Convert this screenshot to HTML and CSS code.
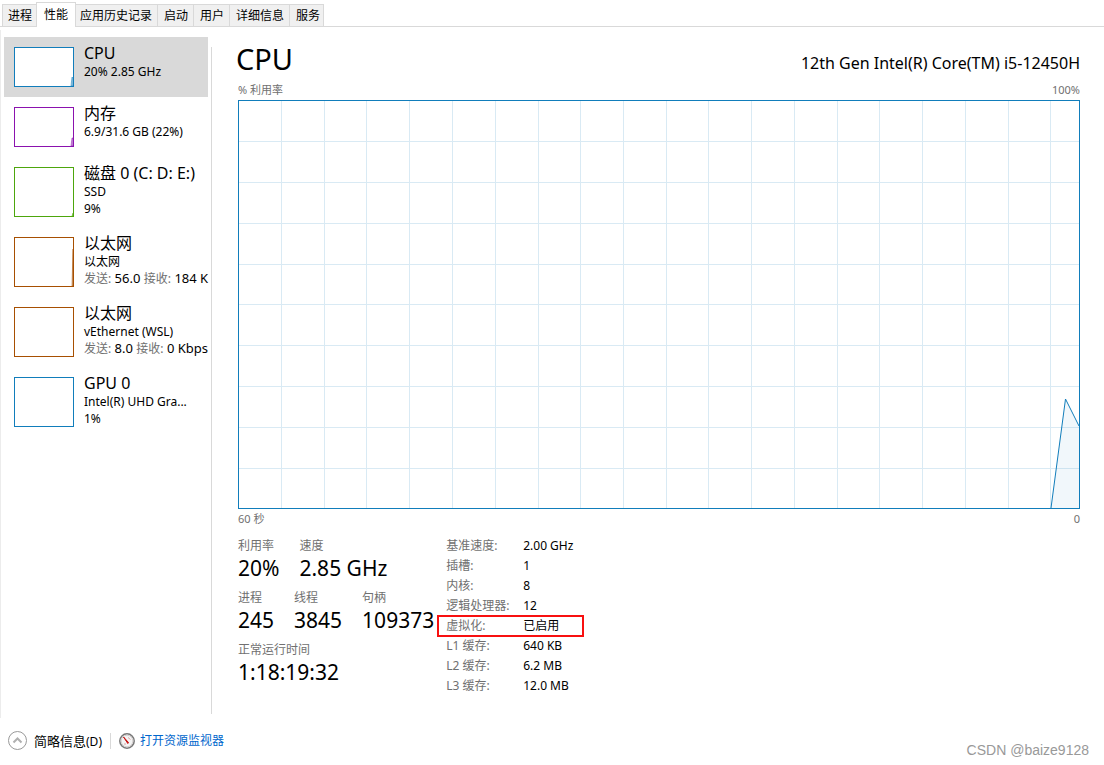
FILE: index.html
```html
<!DOCTYPE html>
<html lang="zh-CN">
<head>
    <meta charset="UTF-8">
    <meta name="viewport" content="width=device-width, initial-scale=1.0">
    <title>任务管理器</title>
    <link rel="stylesheet" href="styles.css">
</head>
<body>

    <nav class="tabs">
        <button class="tab">进程</button>
        <button class="tab active">性能</button>
        <button class="tab">应用历史记录</button>
        <button class="tab">启动</button>
        <button class="tab">用户</button>
        <button class="tab">详细信息</button>
        <button class="tab">服务</button>
    </nav>

    <main>
        <aside class="sidebar">
            <button class="device selected">
                <svg class="thumb blue" viewBox="0 0 58 38"><path d="M56 38L57 29L58 30V38Z"/></svg>
                <span class="device-text">
                    <span class="device-name">CPU</span>
                    <span class="device-info">20% 2.85 GHz</span>
                </span>
            </button>
            <button class="device">
                <svg class="thumb purple" viewBox="0 0 58 38"><path d="M56 38L57 30H58V38Z"/></svg>
                <span class="device-text">
                    <span class="device-name">内存</span>
                    <span class="device-info">6.9/31.6 GB (22%)</span>
                </span>
            </button>
            <button class="device">
                <svg class="thumb tall green" viewBox="0 0 58 48"><path d="M57 48L58 45V48Z"/></svg>
                <span class="device-text">
                    <span class="device-name">磁盘 0 (C: D: E:)</span>
                    <span class="device-info">SSD</span>
                    <span class="device-info">9%</span>
                </span>
            </button>
            <button class="device">
                <svg class="thumb tall brown" viewBox="0 0 58 48"><path d="M57 48L58 11V48Z"/></svg>
                <span class="device-text">
                    <span class="device-name">以太网</span>
                    <span class="device-info">以太网</span>
                    <span class="device-info rates"><i>发送:</i> 56.0 <i>接收:</i> 184 K</span>
                </span>
            </button>
            <button class="device">
                <svg class="thumb tall brown" viewBox="0 0 58 48"></svg>
                <span class="device-text">
                    <span class="device-name">以太网</span>
                    <span class="device-info">vEthernet (WSL)</span>
                    <span class="device-info rates"><i>发送:</i> 8.0 <i>接收:</i> 0 Kbps</span>
                </span>
            </button>
            <button class="device">
                <svg class="thumb tall blue" viewBox="0 0 58 48"></svg>
                <span class="device-text">
                    <span class="device-name">GPU 0</span>
                    <span class="device-info">Intel(R) UHD Gra...</span>
                    <span class="device-info">1%</span>
                </span>
            </button>
        </aside>

        <div class="divider"></div>

        <section class="content">
            <header>
                <h1>CPU</h1>
                <span class="model">12th Gen Intel(R) Core(TM) i5-12450H</span>
            </header>
            <div class="axis"><span>% 利用率</span><span>100%</span></div>
            <svg class="chart" viewBox="0 0 840 407" preserveAspectRatio="none">
                <path class="grid" d="M0 40.5H840M0 81.5H840M0 122.5H840M0 163.5H840M0 203.5H840M0 244.5H840M0 285.5H840M0 326.5H840M0 367.5H840"/>
                <path class="grid" d="M42.5 0V407M85.5 0V407M127.5 0V407M170.5 0V407M213.5 0V407M256.5 0V407M299.5 0V407M341.5 0V407M384.5 0V407M427.5 0V407M469.5 0V407M512.5 0V407M555.5 0V407M598.5 0V407M640.5 0V407M683.5 0V407M726.5 0V407M769.5 0V407M811.5 0V407"/>
                <path class="area" d="M812 407L826.5 298L840 325V407Z"/>
                <path class="line" d="M812 407L826.5 298L840 325"/>
            </svg>
            <div class="axis"><span>60 秒</span><span>0</span></div>

            <div class="details">
                <div class="stats">
                    <dl>
                        <div><dt>利用率</dt><dd>20%</dd></div>
                        <div><dt>速度</dt><dd>2.85 GHz</dd></div>
                    </dl>
                    <dl>
                        <div><dt>进程</dt><dd>245</dd></div>
                        <div><dt>线程</dt><dd>3845</dd></div>
                        <div><dt>句柄</dt><dd>109373</dd></div>
                    </dl>
                    <dl>
                        <div><dt>正常运行时间</dt><dd>1:18:19:32</dd></div>
                    </dl>
                </div>
                <table class="specs">
                    <tr><th>基准速度:</th><td>2.00 GHz</td></tr>
                    <tr><th>插槽:</th><td>1</td></tr>
                    <tr><th>内核:</th><td>8</td></tr>
                    <tr><th>逻辑处理器:</th><td>12</td></tr>
                    <tr class="marked"><th>虚拟化:</th><td>已启用</td></tr>
                    <tr><th>L1 缓存:</th><td>640 KB</td></tr>
                    <tr><th>L2 缓存:</th><td>6.2 MB</td></tr>
                    <tr><th>L3 缓存:</th><td>12.0 MB</td></tr>
                </table>
            </div>
        </section>
    </main>

    <footer>
        <button class="less">
            <svg width="20" height="20" viewBox="0 0 20 20" fill="none">
                <circle cx="9.5" cy="9.5" r="9" stroke="#999"/>
                <path d="M5.5 11.5L9.5 7.5L13.5 11.5" stroke="#b0b0b0" stroke-width="2"/>
            </svg>
            <span>简略信息<small>(D)</small></span>
        </button>
        <a class="monitor" href="#">
            <svg width="16" height="16" viewBox="0 0 16 16" fill="none">
                <circle cx="8" cy="8" r="7.2" fill="#f4f4f4" stroke="#777" stroke-width="1.5"/>
                <circle cx="8" cy="8" r="5.8" stroke="#d5d0d0"/>
                <path d="M4.5 4L9.5 9.5L8.8 10.5Z" fill="#c81414" stroke="#c81414"/>
                <path d="M9 4.5L11.5 6.5M5 11H7" stroke="#d8a8a8"/>
            </svg>
            <span>打开资源监视器</span>
        </a>
        <span class="watermark">CSDN @baize9128</span>
    </footer>

</body>
</html>
```
FILE: styles.css
```css
*,
*::after {
    box-sizing: border-box;
}

body {
    display: flex;
    flex-direction: column;
    min-height: 100vh;
    margin: 0;
    background-color: #fff;
    color: #000;
    font-family: 'Noto Sans', 'Noto Sans CJK SC', sans-serif;
    font-size: 12px;
}

button {
    margin: 0;
    padding: 0;
    border: none;
    background: none;
    color: inherit;
    font: inherit;
    text-align: left;
}

/* Tabs */
.tabs {
    display: flex;
    align-items: flex-end;
    height: 27px;
    padding-left: 2px;
    border-bottom: 1px solid #d9d9d9;
}

.tab {
    height: 22px;
    padding: 0 5px 0 6px;
    border-top: 1px solid #d9d9d9;
    border-right: 1px solid #d9d9d9;
    background-color: #f0f0f0;
    line-height: 20px;
    white-space: nowrap;
}

.tab:first-child {
    padding-left: 5px;
    border-left: 1px solid #d9d9d9;
}

.tab:last-child {
    padding-right: 3px;
}

.tab.active {
    z-index: 1;
    height: 25px;
    margin: 0 -2px -1px;
    padding: 0 7px;
    border-left: 1px solid #d9d9d9;
    background-color: #fff;
}

/* Main area */
main {
    display: flex;
    flex: 1;
    margin-top: 3px;
    border-left: 1px solid #ececec;
}

.sidebar {
    width: 210px;
    padding: 7px 0 0 3px;
    overflow: hidden;
}

.device {
    display: flex;
    gap: 10px;
    width: 204px;
    padding: 7px 0 0 10px;
    min-height: 60px;
    white-space: nowrap;
}

.device:hover {
    background-color: #e5e5e5;
}

.device.selected {
    background-color: #d9d9d9;
}

.thumb {
    flex: none;
    width: 60px;
    height: 40px;
    margin-top: 3px;
    border: 1px solid currentColor;
    background-color: #fff;
}

.thumb.tall {
    height: 50px;
    margin-bottom: 10px;
}

.thumb path {
    fill: currentColor;
    fill-opacity: 0.4;
    stroke: currentColor;
    stroke-width: 0.5;
}

.blue { color: #117dbb; }
.purple { color: #8b12ae; }
.green { color: #4da60c; }
.brown { color: #a74f01; }

.device-name {
    display: block;
    font-size: 16px;
    line-height: 19px;
}

.device-info {
    display: block;
    font-size: 12px;
    line-height: 17px;
}

/* labels stay a size below the numbers */
.rates {
    font-size: 13px;
}

.rates i {
    color: #707070;
    font-size: 12px;
    font-style: normal;
}

.divider {
    width: 1px;
    margin: 17px 0 4px;
    background-color: #d9d9d9;
}

.content {
    display: flex;
    flex: 1;
    flex-direction: column;
    padding: 8px 24px 22px 26px;
}

.content header {
    display: flex;
    justify-content: space-between;
    align-items: center;
    height: 42px;
}

h1 {
    margin: 0 0 2px -2px;
    font-size: 29px;
    font-weight: normal;
}

.model {
    margin-top: 8px;
    font-size: 16px;
}

.axis {
    display: flex;
    justify-content: space-between;
    color: #707070;
    font-size: 11px;
    line-height: 20px;
}

/* Usage chart */
.chart {
    flex: 1;
    width: 100%;
    height: 200px;
    min-height: 200px;
    border: 1px solid #117dbb;
}

.grid {
    fill: none;
    stroke: #d9eaf4;
    shape-rendering: crispEdges;
    vector-effect: non-scaling-stroke;
}

.area {
    fill: #117dbb;
    fill-opacity: 0.06;
}

.line {
    fill: none;
    stroke: #117dbb;
    vector-effect: non-scaling-stroke;
}

/* Numbers below the chart */
.details {
    display: flex;
    gap: 12px;
    margin-top: 7px;
}

.stats dl {
    display: flex;
    gap: 20px;
    margin: 0 0 8px;
}

dt {
    color: #707070;
    line-height: 20px;
}

dd {
    margin: 0;
    font-size: 21px;
    line-height: 24px;
}

.specs {
    align-self: flex-start;
    border-collapse: collapse;
}

.specs th,
.specs td {
    height: 20px;
    padding: 0;
    line-height: 20px;
    text-align: left;
}

.specs th {
    width: 77px;
    color: #707070;
    font-weight: normal;
}

.marked {
    position: relative;
}

.marked td::after {
    content: '';
    position: absolute;
    top: -1px;
    left: -9px;
    width: 147px;
    height: 22px;
    border: 2px solid #f81010;
}

/* Footer */
footer {
    display: flex;
    align-items: center;
    height: 48px;
    padding: 0 15px 2px 8px;
}

.less,
.monitor {
    display: flex;
    align-items: center;
}

.less {
    gap: 6px;
    padding-right: 8px;
    font-size: 13px;
    line-height: 16px;
}

.less small {
    font-size: 12px;
}

.monitor {
    gap: 5px;
    padding-left: 8px;
    border-left: 1px solid #d9d9d9;
    color: #0066cc;
    line-height: 16px;
    text-decoration: none;
}

.monitor:hover {
    text-decoration: underline;
}

.watermark {
    margin: 18px 0 0 auto;
    color: #999;
    font-family: 'Liberation Sans', Arial, sans-serif;
    font-size: 14px;
}
```
